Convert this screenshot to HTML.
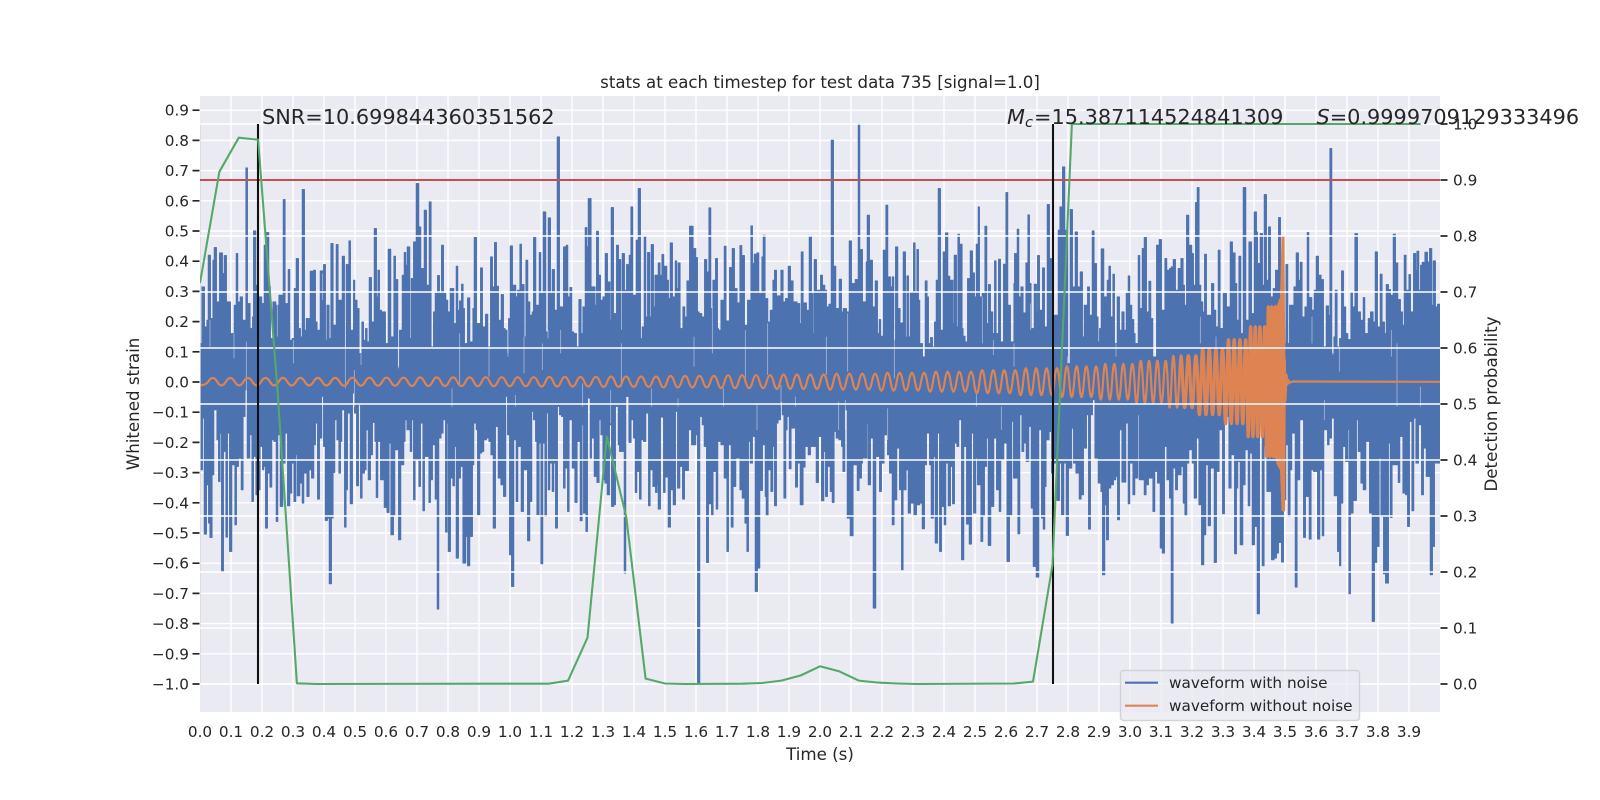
<!DOCTYPE html>
<html><head><meta charset="utf-8"><style>
html,body{margin:0;padding:0;background:#fff}
svg{display:block}
text{font-family:"DejaVu Sans","Liberation Sans",sans-serif;fill:#262626}
.t{font-size:15.28px}
.y text{font-size:15.28px;text-anchor:end}
.x text{font-size:15.28px;text-anchor:middle}
.r text{font-size:15.28px}
.b{font-size:20.83px}
.sl{fill:none;stroke:#eaeaf2;stroke-width:2.4;stroke-opacity:.6}
</style></head><body>
<svg width="1600" height="800" viewBox="0 0 1600 800" xmlns="http://www.w3.org/2000/svg">
<defs><clipPath id="c"><rect x="200" y="96" width="1240" height="616"/></clipPath><clipPath id="c2"><rect x="1180" y="96" width="110" height="616"/></clipPath></defs>
<rect width="1600" height="800" fill="#fff"/>
<rect x="200" y="96" width="1240" height="616" fill="#eaeaf2"/>
<g stroke="#fff" stroke-width="1.39" fill="none">
<path d="M231 96V712M262 96V712M293 96V712M324 96V712M355 96V712M386 96V712M417 96V712M448 96V712M479 96V712M510 96V712M541 96V712M572 96V712M603 96V712M634 96V712M665 96V712M696 96V712M727 96V712M758 96V712M789 96V712M820 96V712M851 96V712M882 96V712M913 96V712M944 96V712M975 96V712M1006 96V712M1037 96V712M1068 96V712M1099 96V712M1130 96V712M1161 96V712M1192 96V712M1223 96V712M1254 96V712M1285 96V712M1316 96V712M1347 96V712M1378 96V712M1409 96V712"/>
<path d="M200 684H1440M200 653.8H1440M200 623.6H1440M200 593.4H1440M200 563.2H1440M200 533H1440M200 502.8H1440M200 472.6H1440M200 442.4H1440M200 412.2H1440M200 382H1440M200 351.8H1440M200 321.6H1440M200 291.4H1440M200 261.2H1440M200 231H1440M200 200.8H1440M200 170.6H1440M200 140.4H1440M200 110.2H1440"/>
</g>
<g clip-path="url(#c)">
<g fill="#4c72b0" stroke="#4c72b0" stroke-width="1.5">
<g transform="translate(200 130) scale(.33333)">
<path d="M0 760V640H5V470H14V590H20V570H24V375H32V565H38V390H42V352H50V515H58V368H68V430H72V376H80V515H92V610H102V525H108V370H114V515H120V500H128V570H137V113H143V520H151V595H157V560H160V302H168V465H176V500H186V520H192V345H198V307H207V470H212V625H218V515H228V525H236V495H249V208H256V520H264V418H270V630H276V625H282V475H288V385H296V595H302V620H306V178H314V600H318V565H330V423H340V420H347V575H352V600H360V422H370V403H377V630H380V525H388V625H392V340H400V585H408V343H415V510H426V378H434V655H438V403H446V332H452V600H460V450H465V510H472V535H478V670H485V575H491V630H496V595H502V635H507V442H515V575H522V295H530V500H533V420H539V540H545V545H557V640H564V357H573V620H581V378H587V448H594V710H598V600H606V435H612V367H618V405H621V350H630V625H633V445H640V335H648V160H657V290H663V415H672V240H680V465H687V215H694V650H700V545H705V490H712V436H719V490H724V345H731V490H738V510H744V760Z"/>
<path d="M0 752V1020H8V865H12V1213H20V1065H25V1180H29V1223H37V1035H42V840H50V930H55V1055H61V910H64V1325H71V965H77V1222H83V910H88V1265H96V1005H104V1185H110V1010H116V985H123V1080H130V860H136V780H141V985H150V915H155V1115H161V980H167V1095H173V1080H181V950H187V1020H192V1010H196V1195H203V1030H209V1072H216V930H221V935H228V1175H234V915H240V1130H249V1000H256V910H262V1128H270V1090H276V1000H281V1115H288V975H291V1098H300V1060H306V1120H312V1030H320V1100H328V1020H334V1045H342V945H347V880H352V1108H359V925H366V800H370V950H375V1172H383V1165H387V1362H395V1165H400V1028H405V870H410V930H416V1030H422V935H426V840H433V1192H439V1080H443V850H450V1122H458V790H463V850H469V1068H476V825H481V1105H487V1030H494V1020H499V900H504V1050H512V975H518V878H524V935H528V1103H534V935H541V1050H552V1133H560V1148H568V940H572V1215H581V1155H585V960H595V1230H603V1005H612V935H616V870H620V900H630V965H636V870H640V1110H646V990H656V1070H662V880H668V1143H674V980H686V1118H692V1050H698V945H705V1108H711V1438H717V925H724V910H730V870H736V1207H742V880H744V752Z"/>
<path class="sl" d="M102 610V685M280 630V700M139 635V830M436 650V775M463 720V830M483 670V705M595 650V715M367 800V830M30 570V650M232 520V620M368 430V510"/>
</g>
<g transform="translate(448 130) scale(.33333)">
<path d="M0 760V545H6V475H18V580H24V408H30V540H34V512H40V462H46V535H50V640H58V503H66V635H74V535H78V322H86V580H97V413H104V590H112V552H120V650H127V380H134V470H139V337H146V468H152V570H159V493H167V595H172V600H178V670H181V565H186V347H194V465H204V500H208V480H215V342H221V463H229V620H233V390H240V515H246V555H252V545H256V322H264V525H273V367H279V490H285V245H294V605H300V263H308V490H312V418H320V540H327V20H335V530H346V350H354V345H360V500H365V472H372V605H378V610H386V650H392V508H400V610H404V530H411V292H417V350H420V205H430V470H442V525H445V303H452V435H458V510H464V500H471V370H479V455H487V570H489V232H497V550H505V345H512V388H519V600H522V370H530V480H535V403H543V375H548V230H555V495H564V330H570V175H578V625H582V590H588V320H594V560H598V367H606V560H609V343H617V530H620V435H630V398H637V435H641V373H648V408H657V450H662V505H666V338H674V500H681V392H687V475H690V398H697V595H704V530H711V560H716V452H724V288H736V355H744V760Z"/>
<path d="M0 752V1265H8V1045H14V1068H20V950H24V1285H32V1045H38V1010H44V1300H54V1220H58V1308H66V1220H74V1005H78V880H84V900H88V1155H96V970H102V965H108V930H116V925H122V935H128V975H135V1195H143V890H150V1045H158V1065H166V1100H174V800H178V915H184V1275H190V1370H198V930H204V1115H210V950H219V1145H227V1020H238V1233H246V1115H252V845H256V870H262V935H266V1155H274V940H278V1302H285V940H290V1160H296V850H300V1080H306V1000H312V1085H318V1000H322V1195H329V830H334V855H340V860H346V1075H352V1015H358V1145H364V870H372V1015H380V1118H388V935H396V1173H403V885H406V1150H413V1205H419V805H426V985H431V925H438V1040H446V1058H454V870H458V915H464V1050H470V1060H477V1095H485V885H490V1130H498V1125H503V830H510V945H514V965H528V1330H534V800H542V938H550V870H556V925H561V1088H567V1025H574V1108H580V930H586V935H594V850H601V1128H607V1020H614V1070H622V1088H628V1065H630V1138H638V862H646V1088H652V1042H660V1192H668V1080H675V1125H683V845H688V1075H696V1010H703V1108H710V1022H722V900H730V945H744V752Z"/>
<path class="sl" d="M123 620V740M35 610V770M180 600V680M228 620V730M283 640V720M338 600V670M520 640V770M738 620V710M12 775V830M175 800V830M202 795V830M404 760V830M488 780V880M610 775V830M690 805V830M300 600V625"/>
</g>
<g transform="translate(696 130) scale(.33333)">
<path d="M0 760V382H5V545H10V550H18V560H25V388H33V425H38V233H45V535H50V450H58V385H65V595H68V600H74V510H84V348H91V572H100V412H108V355H116V475H124V518H131V346H138V376H146V585H154V510H164V287H170V400H174V372H182V368H189V490H197V380H201V315H208V505H216V575H222V540H230V450H235V420H242V497H254V420H262V515H268V505H276V408H284V452H292V515H304V520H312V580H315V365H322V518H332V540H339V318H347V490H352V610H354V388H362V480H373V435H380V465H387V480H392V530H398V522H405V30H413V408H420V535H429V447H437V545H441V535H452V545H459V332H467V460H477V448H486V-20H492V358H500V515H510V395H513V255H521V400H522V390H530V530H537V452H545V610H549V568H555V618H561V360H569V225H576V440H584V470H588V440H594V630H598V350H606V535H613V578H621V365H629V620H632V437H638V620H642V487H652V338H658V487H662V358H668V510H672V640H680V680H687V452H694V500H698V640H703V622H710V650H715V575H720V450H726V175H734V600H741V365H744V760Z"/>
<path d="M0 752V915H4V1662H12V860H18V885H24V950H31V1298H38V1122H46V1155H52V1025H60V1138H66V935H74V945H84V1045H92V1265H98V945H105V1192H112V1070H120V985H131V1080H138V1105H146V1180H152V1265H158V935H162V1000H170V920H177V1385H185V1315H192V1082H200V945H207V1100H210V1157H217V1020H224V1085H231V950H235V1128H242V880H247V870H254V815H258V855H263V1105H270V900H274V860H279V1017H286V895H298V1072H305V1000H312V1125H322V1012H328V950H336V975H344V950H360V1058H368V920H376V1113H384V965H388V1100H395V1010H402V1085H408V1118H415V905H420V925H428V930H436V950H440V1025H447V840H453V1165H462V1218H472V1005H483V1082H490V1045H497V1000H500V985H514V880H516V1065H524V925H531V1435H540V980H550V1085H557V1000H565V915H574V975H580V1030H588V1185H595V1110H603V955H610V1080H616V1320H622V1080H631V1020H636V1150H644V1120H653V1155H662V1125H672V1120H678V1197H686V1005H692V910H700V1005H705V1165H713V980H717V1240H725V910H730V1265H737V1130H744V752Z"/>
<path class="sl" d="M148 600V745M215 580V735M391 620V735M455 550V725M595 600V745M82 775V830M255 765V830M183 820V900M298 800V830M49 530V670M428 815V900M448 810V900M575 835V930"/>
</g>
<g transform="translate(944 130) scale(.33333)">
<path d="M0 760V365H4V308H12V438H18V450H28V580H30V375H38V590H41V312H47V342H55V595H58V618H64V635H70V445H78V362H86V428H92V500H96V342H102V230H107V500H114V490H122V288H129V580H133V463H140V545H147V610H151V392H157V610H163V387H170V635H178V402H185V187H192V525H200V635H209V460H211V370H219V297H225V500H230V470H238V548H245V398H251V254H257V460H262V595H270V462H278V545H280V376H287V540H295V413H302V590H309V223H317V385H323V560H330V555H342V300H347V230H355V110H363V300H372V700H378V238H386V470H393V305H401V470H408V425H416V620H420V525H430V470H437V555H444V302H451V400H458V560H463V635H466V595H471V356H480V500H489V450H494V408H500V560H506V432H512V640H519V500H527V600H533V545H541V600H546V490H552V437H558V525H564V568H570V610H574V640H582V376H588V535H594V355H600V322H608V545H614V453H621V565H627V680H637V345H645V328H653V540H662V385H669V420H676V415H681V410H687V388H695V480H702V415H710V385H718V465H722V525H727V255H735V345H744V760Z"/>
<path d="M0 752V1185H6V1000H12V1128H20V1010H25V1122H32V940H38V950H45V870H52V1290H60V950H67V1183H75V1243H83V910H88V1150H96V985H100V1065H110V1235H117V1160H122V1010H128V925H132V1247H141V1130H150V925H157V1080H165V1145H171V990H180V940H188V1295H197V1155H204V875H208V1045H221V1212H228V855H233V965H240V940H246V995H255V890H261V1135H267V1310H276V1342H285V900H292V1165H297V1198H303V1070H307V930H316V905H322V1030H330V1000H338V1112H347V1000H352V1155H360V1000H366V1217H374V1015H384V895H388V1000H395V1030H405V1108H412V1095H419V955H428V855H433V1198H440V855H446V810H452V985H462V1060H470V1085H475V1335H483V1125H487V1230H494V1075H501V1065H509V1050H516V1040H520V1170H527V900H533V1057H546V880H552V1122H558V1000H566V1095H573V1045H582V855H585V1050H600V1095H607V1065H614V1045H626V1145H633V1025H640V1060H648V1255H654V1270H662V950H668V1050H676V1105H681V1480H688V1015H694V1080H701V1035H712V1010H717V1120H722V1157H729V1000H735V960H744V752Z"/>
<path class="sl" d="M148 630V675M210 640V710M97 790V830M370 680V700M630 640V680M450 810V830M516 640V680M115 500V640M260 520V600M385 900V1000M172 830V900"/>
</g>
<g transform="translate(1192 130) scale(.33333)">
<path d="M0 760V370H5V465H10V217H15V172H22V465H27V515H33V545H37V372H44V555H58V460H66V540H72V590H78V360H85V595H93V490H104V530H114V335H122V368H130V460H135V570H140V378H147V610H153V172H162V570H170V335H179V550H186V245H194V305H197V400H204V310H212V465H216V193H224V450H229V290H236V500H243V475H250V420H259V262H266V420H277V640H281V403H288V640H292V525H305V470H312V368H320V450H324V396H331V560H338V530H345V307H351V502H360V540H366V480H372V378H380V435H388V448H395V650H402V527H410V555H413V55H420V670H425V620H429V480H436V650H442V625H448V422H455V530H462V610H468V628H476V485H482V530H488V310H497V545H506V570H513V502H519V610H528V565H535V545H544V575H549V365H557V590H564V432H571V575H578V610H582V463H590V478H596V495H603V312H611V398H618V508H626V545H632V585H636V375H643V480H650V433H656V545H664V370H672V420H674V363H681V480H685V405H690V396H698V366H707V395H712V355H720V525H723V392H731V530H736V522H744V760Z"/>
<path d="M0 752V1000H6V1105H14V925H20V1125H28V1305H36V1215H42V1005H48V1188H56V1015H66V1298H74V1025H82V900H91V1152H98V860H110V1075H118V975H127V1272H134V1075H138V995H144V1245H153V1065H160V960H168V1128H174V970H180V1245H188V1190H195V1452H203V750H210V1308H217V950H224V1085H238V1290H247V1285H254V1270H260V1238H268V1297H275V1110H282V945H288V1160H295V1020H300V910H309V1372H316V1050H324V870H334V1223H341V1100H351V1228H358V1020H364V1025H376V1228H384V1020H390V1218H396V900H406V945H412V925H419V865H426V1098H436V1265H442V1308H447V1120H453V950H460V995H470V1392H476V1150H484V1112H494V870H498V965H506V1060H513V1080H522V935H532V1150H540V1475H548V1298H555V1250H562V985H566V1160H574V1332H580V1360H590V940H594V1163H601V1005H618V1058H624V920H632V1090H640V1095H646V1190H653V875H659V1143H666V865H671V1000H680V885H688V1095H695V955H702V1040H714V1335H722V1250H728V1000H744V752Z"/>
<path class="sl" d="M423 640V675M442 650V725M615 640V830M397 810V870M72 620V700M205 750V830M25 560V640M360 560V640M598 600V680M470 900V990M685 770V830"/>
</g>
</g>
<g fill="none" stroke="#dd8452" stroke-linejoin="round" stroke-width="2.2">
<path id="ch" d="M200 384.5Q204 386.5 208.3 381.7q4.4-7.4 8.8 0t8.8 0 8.8 0 8.8 0 8.8 0 8.8 0 8.8 0q4.36 7.6 8.71 0t8.71 0 8.71 0 8.71 0 8.71 0 8.71 0 8.71 0 8.71 0q4.27 8 8.53 0t8.53 0 8.53 0 8.53 0 8.53 0 8.53 0 8.53 0 8.53 0q4.12 8.6 8.24 0t8.24 0 8.24 0 8.24 0 8.24 0 8.24 0 8.24 0 8.24 0q4 9 8 0t8 0 8 0 8 0 8 0 8 0 8 0 8 0q3.88 9.6 7.76 0t7.76 0 7.76 0 7.76 0 7.76 0 7.76 0 7.76 0 7.76 0q3.75 10.4 7.5 0t7.5 0 7.5 0 7.5 0 7.5 0 7.5 0 7.5 0 7.5 0q3.61 11.6 7.22 0t7.22 0 7.22 0 7.22 0 7.22 0 7.22 0 7.22 0 7.22 0q3.5 13 7 0t7 0 7 0 7 0 7 0 7 0 7 0 7 0q3.33 14.4 6.67 0t6.67 0 6.67 0 6.67 0 6.67 0 6.67 0 6.67 0 6.67 0q3.21 16 6.43 0t6.43 0 6.43 0 6.43 0 6.43 0 6.43 0 6.43 0 6.43 0q3.05 18 6.1 0t6.1 0 6.1 0 6.1 0 6.1 0 6.1 0 6.1 0 6.1 0q2.92 20 5.85 0t5.85 0 5.85 0 5.85 0 5.85 0 5.85 0 5.85 0 5.85 0q2.75 23 5.5 0t5.5 0 5.5 0 5.5 0 5.5 0 5.5 0 5.5 0 5.5 0q2.6 27 5.2 0t5.2 0 5.2 0 5.2 0 5.2 0 5.2 0 5.2 0 5.2 0q2.43 31 4.87 0t4.87 0 4.87 0 4.87 0 4.87 0 4.87 0 4.87 0 4.87 0q2.25 36 4.5 0t4.5 0 4.5 0 4.5 0 4.5 0 4.5 0 4.5 0 4.5 0q2.07 42 4.15 0t4.15 0 4.15 0 4.15 0 4.15 0 4.15 0 4.15 0 4.15 0q1.87 52 3.75 0t3.75 0 3.75 0 3.75 0 3.75 0 3.75 0 3.75 0 3.75 0q1.65 66 3.3 0t3.3 0 3.3 0 3.3 0 3.3 0 3.3 0 3.3 0 3.3 0q1.44 84 2.87 0t2.87 0 2.87 0 2.87 0 2.87 0 2.87 0 2.87 0 2.87 0q1.16 110 2.33 0t2.33 0 2.33 0 2.33 0 2.33 0 2.33 0 2.33 0 2.33 0q.85 150 1.71 0t1.71 0 1.71 0 1.71 0 1.71 0 1.71 0 1.71 0 1.71 0L1280.3 300L1281 465L1281.8 290L1282.5 480L1283 237L1283.6 510L1284.3 360L1285 400L1286 375L1287 384L1288 380.5L1290 382.5L1293 381.5L1440 381.8"/>
</g>
<g fill="none" stroke="#dd8452" stroke-linejoin="round" stroke-width="3.2" clip-path="url(#c2)"><use href="#ch"/></g>
<path d="M1268 322L1272 313L1277 305L1280 298L1281.5 240L1284 236L1285.5 360L1285.5 400L1284.3 511L1281.5 511L1280 470L1277 465L1272 447L1268 440Z" fill="#dd8452"/>
<path d="M200 124V684" stroke="#d6d6dd" stroke-width="1.4" fill="none"/>
<path d="M200 684H1440M200 628H1440M200 572H1440M200 516H1440M200 460H1440M200 404H1440M200 348H1440M200 292H1440M200 236H1440M200 180H1440M200 124H1440" stroke="#fff" stroke-width="1.39" fill="none"/>
<path d="M200 180H1440" stroke="#c44e52" stroke-width="2.08" fill="none"/>
<path d="M258 124V684M1053 124V684" stroke="#111" stroke-width="2.08" fill="none"/>
<path d="M200 283L219.4 171.7L238.75 137.7L258.1 139.7L277.5 390L296.9 683.3L316.25 684L490 683.7L548.75 683.7L568.1 680.6L587.5 637.7L606.9 436.7L626.25 517L645.6 678.6L665 683.5L684.4 684L742.5 683.7L761.9 683L781.25 680.6L800.6 675.5L820 666.3L839.4 671.4L858.75 680.6L878.1 682.6L897.5 683.5L916.9 684L1013.75 683.5L1033 681.6L1052.5 565L1071.9 124L1420.6 124" stroke="#55a868" stroke-width="2.08" fill="none" stroke-linejoin="round"/>
</g>
<g class="y">
<text x="189" y="689.5">−1.0</text><text x="189" y="659.3">−0.9</text><text x="189" y="629.1">−0.8</text><text x="189" y="598.9">−0.7</text><text x="189" y="568.7">−0.6</text><text x="189" y="538.5">−0.5</text><text x="189" y="508.3">−0.4</text><text x="189" y="478.1">−0.3</text><text x="189" y="447.9">−0.2</text><text x="189" y="417.7">−0.1</text><text x="189" y="387.5">0.0</text><text x="189" y="357.3">0.1</text><text x="189" y="327.1">0.2</text><text x="189" y="296.9">0.3</text><text x="189" y="266.7">0.4</text><text x="189" y="236.5">0.5</text><text x="189" y="206.3">0.6</text><text x="189" y="176.1">0.7</text><text x="189" y="145.9">0.8</text><text x="189" y="115.7">0.9</text>
</g>
<path d="M192.5 684H199.5M192.5 653.8H199.5M192.5 623.6H199.5M192.5 593.4H199.5M192.5 563.2H199.5M192.5 533H199.5M192.5 502.8H199.5M192.5 472.6H199.5M192.5 442.4H199.5M192.5 412.2H199.5M192.5 382H199.5M192.5 351.8H199.5M192.5 321.6H199.5M192.5 291.4H199.5M192.5 261.2H199.5M192.5 231H199.5M192.5 200.8H199.5M192.5 170.6H199.5M192.5 140.4H199.5M192.5 110.2H199.5M1440.5 684H1447.5M1440.5 628H1447.5M1440.5 572H1447.5M1440.5 516H1447.5M1440.5 460H1447.5M1440.5 404H1447.5M1440.5 348H1447.5M1440.5 292H1447.5M1440.5 236H1447.5M1440.5 180H1447.5M1440.5 124H1447.5" stroke="#262626" stroke-width="1.7" fill="none"/>
<g class="r">
<text x="1453" y="689.5">0.0</text><text x="1453" y="633.5">0.1</text><text x="1453" y="577.5">0.2</text><text x="1453" y="521.5">0.3</text><text x="1453" y="465.5">0.4</text><text x="1453" y="409.5">0.5</text><text x="1453" y="353.5">0.6</text><text x="1453" y="297.5">0.7</text><text x="1453" y="241.5">0.8</text><text x="1453" y="185.5">0.9</text><text x="1453" y="129.5">1.0</text>
</g>
<g class="x">
<text x="200" y="737">0.0</text><text x="231" y="737">0.1</text><text x="262" y="737">0.2</text><text x="293" y="737">0.3</text><text x="324" y="737">0.4</text><text x="355" y="737">0.5</text><text x="386" y="737">0.6</text><text x="417" y="737">0.7</text><text x="448" y="737">0.8</text><text x="479" y="737">0.9</text><text x="510" y="737">1.0</text><text x="541" y="737">1.1</text><text x="572" y="737">1.2</text><text x="603" y="737">1.3</text><text x="634" y="737">1.4</text><text x="665" y="737">1.5</text><text x="696" y="737">1.6</text><text x="727" y="737">1.7</text><text x="758" y="737">1.8</text><text x="789" y="737">1.9</text><text x="820" y="737">2.0</text><text x="851" y="737">2.1</text><text x="882" y="737">2.2</text><text x="913" y="737">2.3</text><text x="944" y="737">2.4</text><text x="975" y="737">2.5</text><text x="1006" y="737">2.6</text><text x="1037" y="737">2.7</text><text x="1068" y="737">2.8</text><text x="1099" y="737">2.9</text><text x="1130" y="737">3.0</text><text x="1161" y="737">3.1</text><text x="1192" y="737">3.2</text><text x="1223" y="737">3.3</text><text x="1254" y="737">3.4</text><text x="1285" y="737">3.5</text><text x="1316" y="737">3.6</text><text x="1347" y="737">3.7</text><text x="1378" y="737">3.8</text><text x="1409" y="737">3.9</text>
</g>
<text x="820" y="88" text-anchor="middle" style="font-size:16.64px">stats at each timestep for test data 735 [signal=1.0]</text>
<text x="820" y="760" text-anchor="middle" style="font-size:16.67px">Time (s)</text>
<text transform="translate(139 404) rotate(-90)" text-anchor="middle" style="font-size:16.67px">Whitened strain</text>
<text transform="translate(1497 404) rotate(-90)" text-anchor="middle" style="font-size:16.67px">Detection probability</text>
<text class="b" x="262" y="124">SNR=10.699844360351562</text>
<text class="b" x="1007" y="124"><tspan font-style="italic">M</tspan><tspan font-style="italic" dy="3" style="font-size:14.6px">c</tspan><tspan dy="-3" dx="1">=15.387114524841309</tspan></text>
<text class="b" x="1316.5" y="124"><tspan font-style="italic">S</tspan>=0.9999709129333496</text>
<rect x="1120.5" y="670.5" width="239" height="50" rx="3" fill="#eaeaf2" fill-opacity=".8" stroke="#cccccc" stroke-opacity=".8" stroke-width="1.39"/>
<path d="M1125 682.7H1158" stroke="#4c72b0" stroke-width="2.08"/>
<path d="M1125 705.7H1158" stroke="#dd8452" stroke-width="2.08"/>
<text class="t" x="1169" y="688">waveform with noise</text>
<text class="t" x="1169" y="711">waveform without noise</text>
</svg>
</body></html>
